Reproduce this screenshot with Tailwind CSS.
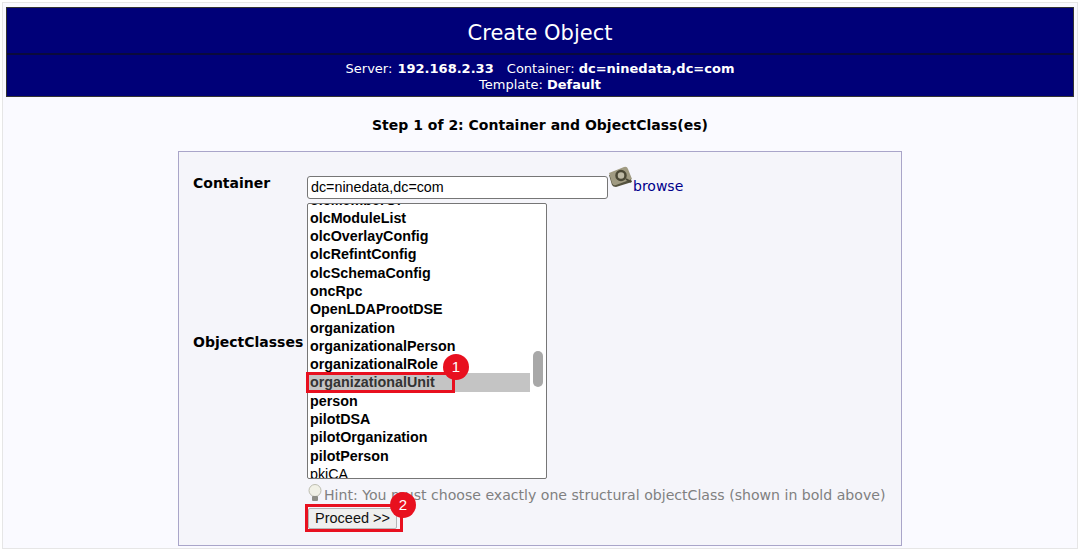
<!DOCTYPE html>
<html lang="en">
<head>
    <meta charset="UTF-8">
    <title>Create Object</title>
    <script src="https://cdn.jsdelivr.net/npm/@tailwindcss/browser@4"></script>
</head>
<body class="bg-white h-[551px] overflow-hidden font-['DejaVu_Sans',sans-serif] text-black">
    <div class="mx-[2px] mt-[2px] h-[547px] bg-[#fafaff] border border-[#e6e6e6] px-[3px] pt-[4px] overflow-hidden">
        <div class="bg-[#000078] border border-[#333] text-white text-center">
            <div class="h-[47px] leading-[50px] text-[21px] border-b-2 border-[#0a0a3c]">Create Object</div>
            <div class="h-[41px] pt-[6px] text-[13px] leading-[16px]">
                <div>Server: <b class="ml-[1px]">192.168.2.33</b> <span class="ml-[9px]">Container:</span> <b>dc=ninedata,dc=com</b></div>
                <div>Template: <b>Default</b></div>
            </div>
        </div>

        <h3 class="mt-[18px] text-center text-[14px] leading-[20px] font-bold">Step 1 of 2: Container and ObjectClass(es)</h3>

        <div class="relative ml-[172px] mt-[16px] w-[724px] h-[395px] bg-[#f5f5fa] border border-[#a9a5c9]">
            <div class="flex pl-[14px] pt-[21px]">
                <div class="w-[114px] shrink-0 text-[14px] font-bold leading-[20px]">Container</div>
                <div class="flex items-start">
                    <div class="w-[301px] h-[23px] mt-[3px] bg-white border border-[#767676] rounded-[3px] pl-[3px] font-['Liberation_Sans',sans-serif] text-[14.3px] leading-[21px]">dc=ninedata,dc=com</div>
                    <svg class="mt-[-7px]" width="26" height="24" viewBox="0 0 26 24">
                        <path d="M1 9 L4 19 Q5 21 8 21 L24 16 L21 8 Z" fill="#55533f" />
                        <path d="M1 7 L16 1 Q19 0 20 3 L24 13 L8 19 Q5 20 4 17 Z" fill="#a09b82" />
                        <circle cx="13" cy="9.5" r="4.5" fill="#bdb9a4" stroke="#4a4835" stroke-width="2.5" />
                        <path d="M18 13 L23 16" stroke="#4a4835" stroke-width="2" />
                    </svg>
                    <a class="text-[#00008b] text-[14px] leading-[20px] mt-[3px] -ml-[1px]">browse</a>
                </div>
            </div>

            <div class="flex pl-[14px]">
                <div class="w-[114px] shrink-0 text-[14px] font-bold leading-[20px] pt-[133px]">ObjectClasses</div>
                <div>
                    <div class="relative w-[240px] h-[276px] mt-[4px] bg-white border border-[#767676] rounded-[2px] overflow-hidden font-['Liberation_Sans',sans-serif] text-[14.3px] font-bold leading-[18.3px]">
                        <ul class="-mt-[13.5px] pl-[2px]">
                            <li class="h-[18.3px]">olcMemberOf</li>
                            <li class="h-[18.3px]">olcModuleList</li>
                            <li class="h-[18.3px]">olcOverlayConfig</li>
                            <li class="h-[18.3px]">olcRefintConfig</li>
                            <li class="h-[18.3px]">olcSchemaConfig</li>
                            <li class="h-[18.3px]">oncRpc</li>
                            <li class="h-[18.3px]">OpenLDAProotDSE</li>
                            <li class="h-[18.3px]">organization</li>
                            <li class="h-[18.3px]">organizationalPerson</li>
                            <li class="h-[18.3px]">organizationalRole</li>
                            <li class="h-[18.3px] bg-[#c4c4c4] w-[222px] -ml-[2px] pl-[2px] text-[#333]">organizationalUnit</li>
                            <li class="h-[18.3px]">person</li>
                            <li class="h-[18.3px]">pilotDSA</li>
                            <li class="h-[18.3px]">pilotOrganization</li>
                            <li class="h-[18.3px]">pilotPerson</li>
                            <li class="h-[18.3px] font-normal">pkiCA</li>
                        </ul>
                        <div class="absolute left-[225px] top-[147px] w-[10px] h-[36px] rounded-[5px] bg-[#a8a8a8]"></div>
                    </div>

                    <div class="flex items-end h-[25px] mt-[1px] text-[#808080] text-[14.1px] leading-[20px] whitespace-nowrap">
                        <svg class="mb-[3px]" width="17" height="18" viewBox="0 0 17 18">
                            <circle cx="8" cy="6.5" r="6" fill="#f1f1e6" stroke="#bdbdb0" />
                            <rect x="5" y="12" width="6" height="5" rx="1" fill="#8f8f86" />
                        </svg>
                        <span>Hint: You must choose exactly one structural objectClass (shown in bold above)</span>
                    </div>

                    <button class="block mt-[3px] ml-[1px] w-[89px] h-[21px] bg-[#efefef] border border-[#b5b5b5] rounded-[2px] font-['Liberation_Sans',sans-serif] text-[14.5px] leading-[19px] text-[#111]">Proceed &gt;&gt;</button>
                </div>
            </div>

            <!-- annotations on top of the shot -->
            <div class="absolute left-[127px] top-[220px] w-[149px] h-[21px] border-[3px] border-[#e8101f]"></div>
            <div class="absolute left-[126px] top-[352px] w-[98px] h-[28px] border-[3px] border-[#e8101f]"></div>
            <div class="absolute left-[264px] top-[202px] w-[26px] h-[26px] rounded-full bg-[#e8101f] text-white text-[15px] leading-[26px] text-center font-['Liberation_Sans',sans-serif]">1</div>
            <div class="absolute left-[211px] top-[340px] w-[26px] h-[26px] rounded-full bg-[#e8101f] text-white text-[15px] leading-[26px] text-center font-['Liberation_Sans',sans-serif]">2</div>
        </div>
    </div>
</body>
</html>
